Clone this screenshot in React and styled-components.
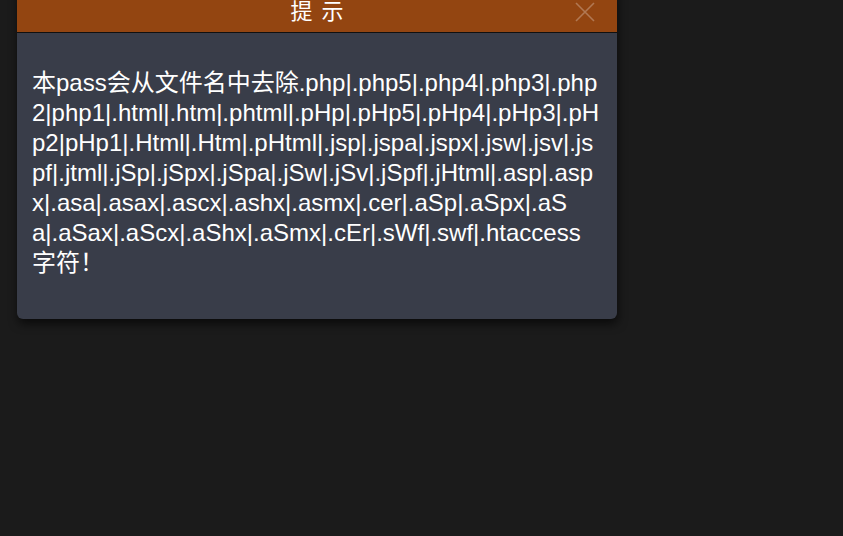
import styled, { createGlobalStyle } from "styled-components";

const GlobalStyle = createGlobalStyle`
    html, body {
        margin: 0;
        padding: 0;
        background: #1b1b1b;
        height: 100%;
        overflow: hidden;
    }
    body {
        font-family: "Liberation Sans", "Noto Sans CJK SC", Arial, sans-serif;
    }
`;

// wrapped the same way the original dialog wraps it
const lines = [
    "本pass会从文件名中去除.php|.php5|.php4|.php3|.php",
    "2|php1|.html|.htm|.phtml|.pHp|.pHp5|.pHp4|.pHp3|.pH",
    "p2|pHp1|.Html|.Htm|.pHtml|.jsp|.jspa|.jspx|.jsw|.jsv|.js",
    "pf|.jtml|.jSp|.jSpx|.jSpa|.jSw|.jSv|.jSpf|.jHtml|.asp|.asp",
    "x|.asa|.asax|.ascx|.ashx|.asmx|.cer|.aSp|.aSpx|.aS",
    "a|.aSax|.aScx|.aShx|.aSmx|.cEr|.sWf|.swf|.htaccess",
    "字符！",
];

const App = () => {
    return (
        <>
            <GlobalStyle />
            <Page>
                <Dialog role="dialog" aria-label="提示">
                    <Header>
                        <Title>提示</Title>
                        <CloseButton aria-label="close">
                            <svg width="22" height="22" viewBox="0 0 22 22">
                                <path d="M2 2 L20 20 M20 2 L2 20" stroke="currentColor" strokeWidth="1.6" fill="none" />
                            </svg>
                        </CloseButton>
                    </Header>
                    <Body>
                        {lines.map((line, i) => (
                            <span key={i}>
                                {line}
                                {i < lines.length - 1 && <br />}
                            </span>
                        ))}
                    </Body>
                </Dialog>
            </Page>
        </>
    );
};

const Page = styled.div`
    padding-left: 17px;
`;

const Dialog = styled.div`
    width: 600px;
    margin-top: -9px;
    background: #393d49;
    border-radius: 0 0 6px 6px;
    box-shadow: 1px 5px 10px rgba(0, 0, 0, 0.6);
    overflow: hidden;
`;

const Header = styled.div`
    position: relative;
    height: 41px;
    background: #934511;
    border-bottom: 1px solid #101010;
    display: flex;
    align-items: center;
    justify-content: center;
`;

const Title = styled.span`
    color: #ffffff;
    font-size: 22px;
    letter-spacing: 9px;
    margin-right: -9px;
    line-height: 41px;
`;

const CloseButton = styled.span`
    position: absolute;
    right: 21px;
    top: 10px;
    color: rgba(255, 255, 255, 0.28);
    display: flex;
`;

const Body = styled.p`
    margin: 0;
    padding: 35px 12px 41px 15px;
    color: #ffffff;
    font-size: 24px;
    line-height: 30px;
    word-break: break-all;
`;

export default App;
